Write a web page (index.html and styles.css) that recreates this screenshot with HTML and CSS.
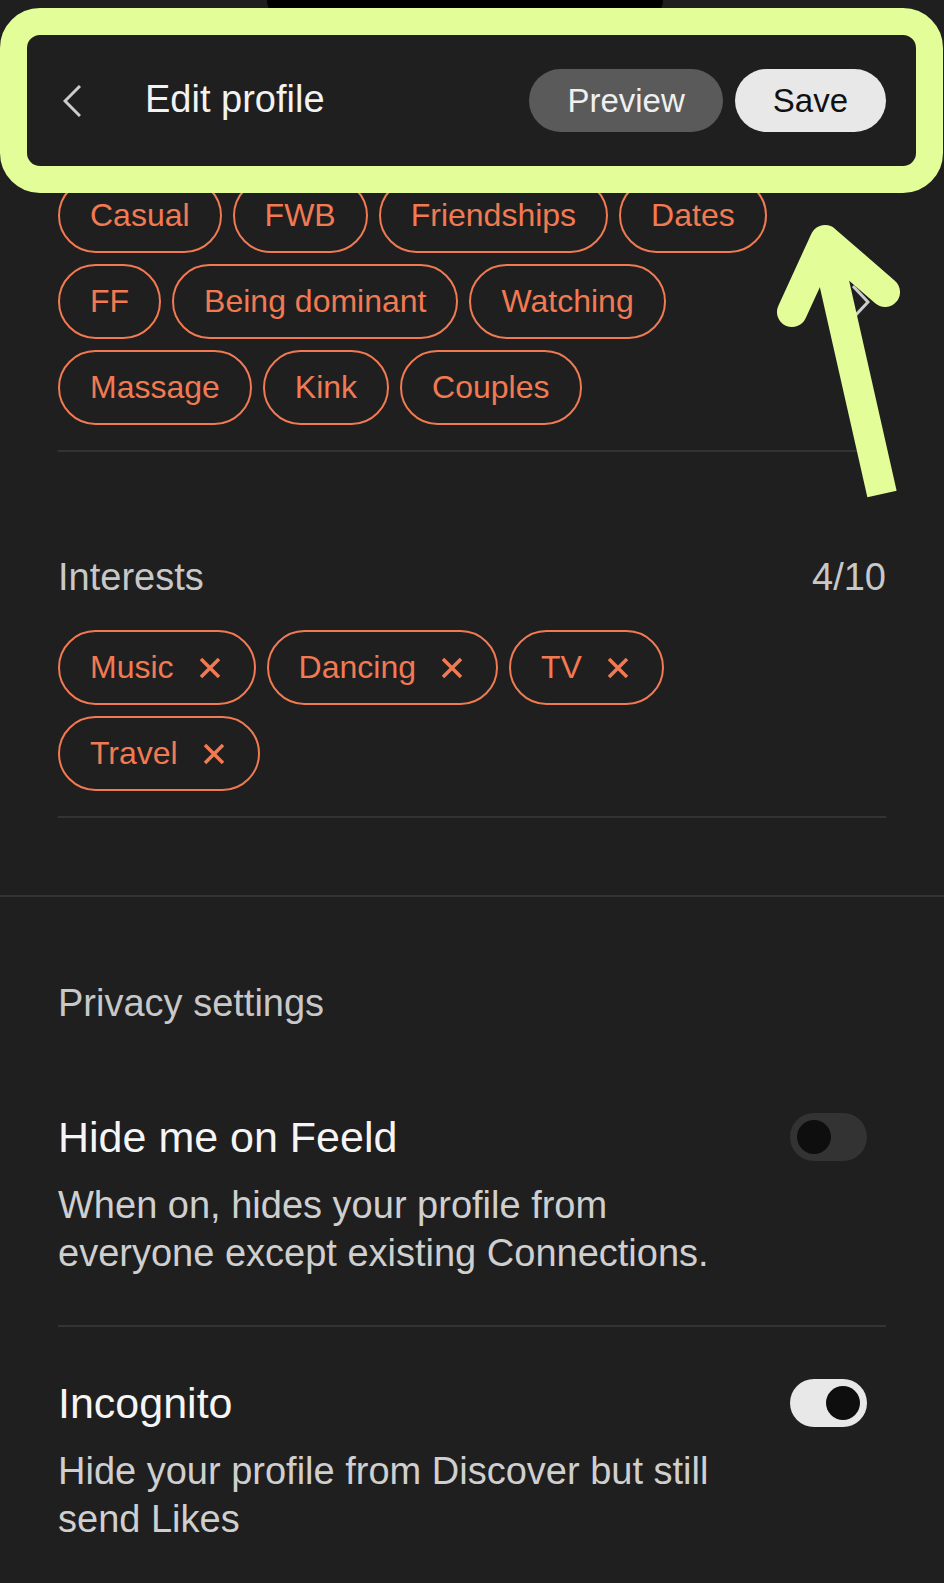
FILE: index.html
```html
<!DOCTYPE html>
<html lang="en">

<head>
  <meta charset="UTF-8" />
  <meta name="viewport" content="width=device-width, initial-scale=1" />
  <title>Edit profile</title>
  <link rel="stylesheet" href="styles.css">
</head>

<body>
  <div class="page">
    <div class="notch"></div>

    <!-- top bar, highlighted -->
    <header class="topbar">
      <svg class="back" width="18" height="32" viewBox="0 0 18 32">
        <polyline points="17,1 2,16 17,31" fill="none" stroke="#cccccc" stroke-width="3" />
      </svg>
      <h1 class="title">Edit profile</h1>
      <div class="actions">
        <button class="btn btn-preview">Preview</button>
        <button class="btn btn-save">Save</button>
      </div>
    </header>

    <section class="looking">
      <div class="chips">
        <span class="chip">Casual</span>
        <span class="chip">FWB</span>
        <span class="chip">Friendships</span>
        <span class="chip">Dates</span>
        <span class="chip">FF</span>
        <span class="chip">Being dominant</span>
        <span class="chip">Watching</span>
        <span class="chip">Massage</span>
        <span class="chip">Kink</span>
        <span class="chip">Couples</span>
      </div>
      <svg class="more" width="18" height="34" viewBox="0 0 18 34">
        <polyline points="1,1 16,17 1,33" fill="none" stroke="#cccccc" stroke-width="3" />
      </svg>
    </section>

    <section class="interests">
      <div class="section-head">
        <span>Interests</span>
        <span>4/10</span>
      </div>
      <div class="chips">
        <span class="chip">Music <svg class="x" viewBox="0 0 24 24"><path d="M3 3 L21 21 M21 3 L3 21" /></svg></span>
        <span class="chip">Dancing <svg class="x" viewBox="0 0 24 24"><path d="M3 3 L21 21 M21 3 L3 21" /></svg></span>
        <span class="chip">TV <svg class="x" viewBox="0 0 24 24"><path d="M3 3 L21 21 M21 3 L3 21" /></svg></span>
        <span class="chip">Travel <svg class="x" viewBox="0 0 24 24"><path d="M3 3 L21 21 M21 3 L3 21" /></svg></span>
      </div>
    </section>

    <div class="rule-full"></div>

    <section class="privacy">
      <div class="privacy-label">Privacy settings</div>

      <div class="setting">
        <div class="setting-row">
          <span class="setting-title">Hide me on Feeld</span>
          <span class="toggle"><span class="knob"></span></span>
        </div>
        <p class="setting-desc">When on, hides your profile from everyone except existing Connections.</p>
      </div>

      <div class="setting setting-last">
        <div class="setting-row">
          <span class="setting-title">Incognito</span>
          <span class="toggle on"><span class="knob"></span></span>
        </div>
        <p class="setting-desc">Hide your profile from Discover but still send Likes</p>
      </div>
    </section>

    <!-- annotation arrow pointing at Save -->
    <svg class="arrow" width="944" height="520" viewBox="0 0 944 520">
      <line x1="882" y1="494" x2="825" y2="242" stroke="#e3fd99" stroke-width="30" />
      <polyline points="792,312 825,240 885,292" fill="none" stroke="#e3fd99" stroke-width="30"
        stroke-linecap="round" stroke-linejoin="round" />
    </svg>
  </div>
</body>

</html>
```

FILE: styles.css
```css
body {
  margin: 0;
  background-color: #1f1f1f;
  font-family: "Liberation Sans", Arial, sans-serif;
  color: #f2f2f2;
}

.page {
  position: relative;
  width: 944px;
  min-height: 1583px;
  overflow: hidden;
}

.notch {
  position: absolute;
  top: -20px;
  left: 267px;
  width: 396px;
  height: 40px;
  background-color: #000;
  border-radius: 20px;
  z-index: 1;
}

.topbar {
  position: absolute;
  top: 8px;
  left: 0;
  width: 943px;
  height: 185px;
  box-sizing: border-box;
  border: 27px solid #e3fd99;
  border-radius: 40px;
  background-color: #1f1f1f;
  display: flex;
  align-items: center;
  padding: 0 30px 0 36px;
  z-index: 2;
}

.back {
  display: block;
}

.title {
  margin: 0 0 2px 64px;
  font-size: 38px;
  font-weight: normal;
  color: #f2f2f2;
}

.actions {
  margin-left: auto;
  display: flex;
  gap: 12px;
}

.btn {
  height: 63px;
  padding: 0 38px;
  border: none;
  border-radius: 32px;
  font-family: inherit;
  font-size: 33px;
}

.btn-preview {
  background-color: #5a5a5a;
  color: #f0f0f0;
}

.btn-save {
  background-color: #e8e8e8;
  color: #111;
}

.looking {
  margin: 0 58px;
  padding: 178px 0 25px;
  border-bottom: 2px solid #333;
  display: flex;
  align-items: center;
}

.chips {
  flex: 1;
  display: flex;
  flex-wrap: wrap;
  gap: 11px;
}

.looking .chips {
  margin-right: 40px;
}

.interests .chips {
  max-width: 760px;
}

.more {
  margin-right: 16px;
}

.chip {
  height: 75px;
  box-sizing: border-box;
  padding: 0 30px;
  border: 2px solid #f27a52;
  border-radius: 38px;
  display: flex;
  align-items: center;
  font-size: 32px;
  color: #f27a52;
}

.interests .chip {
  padding-right: 32px;
}

.x {
  width: 24px;
  height: 24px;
  margin-left: 24px;
  fill: none;
  stroke: #f27a52;
  stroke-width: 3.5;
}

.interests {
  margin: 0 58px;
  padding: 103px 0 25px;
  border-bottom: 2px solid #333;
}

.section-head {
  display: flex;
  justify-content: space-between;
  font-size: 38px;
  line-height: 44px;
  color: #c8c8c8;
  margin-bottom: 31px;
}

.rule-full {
  margin-top: 77px;
  height: 2px;
  background-color: #333;
}

.privacy {
  margin: 0 58px;
  padding-top: 84px;
}

.privacy-label {
  font-size: 38px;
  line-height: 44px;
  color: #c8c8c8;
  margin-bottom: 38px;
}

.setting {
  padding: 49px 0 48px;
  border-bottom: 2px solid #333;
}

.setting-last {
  padding-top: 51px;
  border-bottom: none;
}

.setting-row {
  display: flex;
  justify-content: space-between;
  align-items: center;
}

.setting-title {
  font-size: 43px;
  line-height: 50px;
  color: #f5f5f5;
}

.setting-desc {
  margin: 19px 0 0;
  max-width: 690px;
  font-size: 38px;
  line-height: 48px;
  color: #cfcfcf;
}

.toggle {
  width: 77px;
  height: 48px;
  box-sizing: border-box;
  padding: 7px;
  margin-right: 19px;
  border-radius: 24px;
  background-color: #333;
  display: flex;
  align-items: center;
}

.toggle.on {
  background-color: #e8e8e8;
  justify-content: flex-end;
}

.knob {
  width: 34px;
  height: 34px;
  border-radius: 50%;
  background-color: #0e0e0e;
}

.arrow {
  position: absolute;
  top: 0;
  left: 0;
  z-index: 3;
}
```
